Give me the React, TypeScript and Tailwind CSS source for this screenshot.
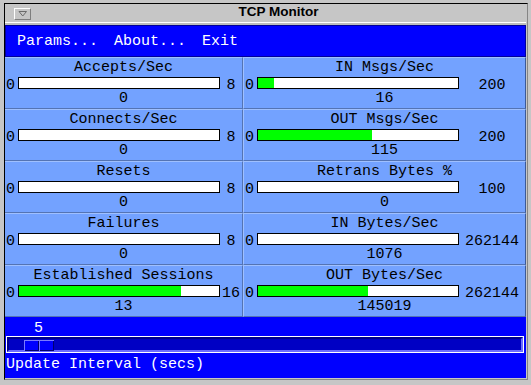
import React from 'react';

interface Meter {
  label: string;
  max: number;
  value: number;
}

const rows: [Meter, Meter][] = [
  [
    { label: 'Accepts/Sec', max: 8, value: 0 },
    { label: 'IN Msgs/Sec', max: 200, value: 16 },
  ],
  [
    { label: 'Connects/Sec', max: 8, value: 0 },
    { label: 'OUT Msgs/Sec', max: 200, value: 115 },
  ],
  [
    { label: 'Resets', max: 8, value: 0 },
    { label: 'Retrans Bytes %', max: 100, value: 0 },
  ],
  [
    { label: 'Failures', max: 8, value: 0 },
    { label: 'IN Bytes/Sec', max: 262144, value: 1076 },
  ],
  [
    { label: 'Established Sessions', max: 16, value: 13 },
    { label: 'OUT Bytes/Sec', max: 262144, value: 145019 },
  ],
];

const mono = "font-['Liberation_Mono','DejaVu_Sans_Mono',monospace] text-[15px] leading-[17px]";

function MeterCell({ meter, right }: { meter: Meter; right?: boolean }) {
  // fill width in px of the 200px inner bar
  const fill = Math.floor((meter.value / meter.max) * 200);

  return (
    <div
      className={`h-[52px] border-t border-b border-t-[#9fc0ff] border-b-[#5474b4] bg-[#73a2ff] pt-[1px] pb-[1px] text-black ${mono} ${
        right ? 'border-l border-r border-l-[#9fc0ff] border-r-[#3c5a96]' : 'border-r border-r-[#5474b4]'
      }`}
    >
      <div className="h-[17px] text-center whitespace-pre">{meter.label}</div>
      <div className="mt-[1px] flex h-[12px] items-start pl-[1px]">
        <span className="w-[12px] shrink-0">0</span>
        <div className="h-[12px] w-[202px] shrink-0 border border-black bg-white">
          <div className="h-full bg-[#00ff00]" style={{ width: fill }} />
        </div>
        <span className="flex-1 text-center">{meter.max}</span>
      </div>
      <div className="mt-[1px] h-[17px] text-center">{meter.value}</div>
    </div>
  );
}

export default function App() {
  return (
    <div className="h-[385px] w-[531px] overflow-hidden bg-[#c6c6c6] pt-[3px] pl-[4px] pr-[3px] pb-[5px]">
      <div className="flex h-full flex-col border-t border-l border-r border-b border-t-black border-l-black border-r-[#858585] border-b-[#858585] pr-[1px]">
        {/* title bar */}
        <div className="flex h-[18px] items-start">
          <div className="ml-[9px] mt-[4px] flex h-[12px] w-[17px] items-start justify-center border-t border-l border-r border-b border-t-white border-l-white border-r-[#7e7e7e] border-b-[#7e7e7e]">
            <svg width="10" height="7" viewBox="0 0 10 7" className="mt-[1px]">
              <path d="M1 1.5 H8.5 L4.75 6 Z" fill="none" stroke="#6b6b6b" strokeWidth="1" />
            </svg>
          </div>
          <div className="flex-1 text-center font-['Liberation_Sans',Arial,sans-serif] text-[13.5px] font-bold leading-[16px] text-black">
            TCP Monitor
          </div>
        </div>
        <div className="h-[1px] bg-white" />
        <div className="h-[2px] bg-[#bdbdbd]" />

        {/* menu bar */}
        <div className={`flex h-[32px] border border-[#00009a] bg-[#0000ff] pl-[3px] pt-[7px] text-white ${mono}`}>
          <span className="px-[8px]">Params...</span>
          <span className="px-[8px]">About...</span>
          <span className="px-[8px]">Exit</span>
        </div>

        {/* meters */}
        <div className="grid grid-cols-[238px_283px]">
          {rows.map(([l, r], i) => (
            <React.Fragment key={i}>
              <MeterCell meter={l} />
              <MeterCell meter={r} right />
            </React.Fragment>
          ))}
        </div>

        {/* update interval scale */}
        <div className={`flex h-[61px] w-[521px] flex-col bg-[#0000ff] text-white ${mono}`}>
          <div className="h-[19px] pl-[29px] pt-[3px]">5</div>
          <div className="ml-[1px] h-[17px] w-[518px] border border-white">
            <div className="h-full border-t-2 border-l-2 border-r-2 border-b-2 border-t-[#00008a] border-l-[#00008a] border-r-[#6c6cff] border-b-[#6c6cff] bg-[#0000c4] pl-[15px] pt-[1px]">
              <div className="flex h-[11px] w-[30px] gap-[1px] bg-[#7a7aff] pt-[1px] pl-[1px]">
                <div className="h-full w-[14px] border-r border-b border-r-[#000070] border-b-[#000070] bg-[#0000ff]" />
                <div className="h-full w-[14px] border-r border-b border-r-[#000070] border-b-[#000070] bg-[#0000ff]" />
              </div>
            </div>
          </div>
          <div className="h-[25px] pl-[1px] pt-[3px] whitespace-pre">Update Interval (secs)</div>
        </div>
        <div className="h-[1px]" />
      </div>
    </div>
  );
}
